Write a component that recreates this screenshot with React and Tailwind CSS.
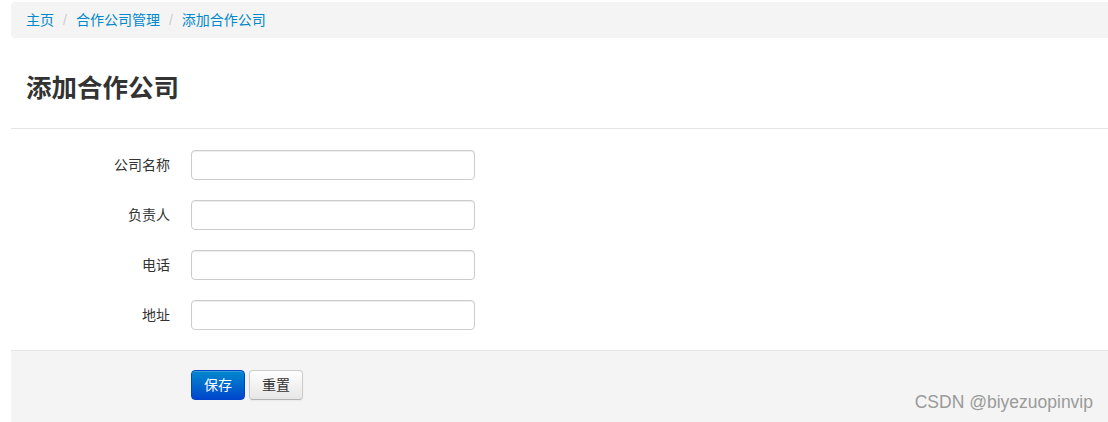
import React from "react";

const fields = ["公司名称", "负责人", "电话", "地址"];

export default function App() {
  return (
    <div
      className="min-h-[422px] bg-white pl-[11px] text-[14px] text-[#333]"
      style={{ fontFamily: '"Liberation Sans", "Noto Sans CJK SC", sans-serif' }}
    >
      {/* Breadcrumb */}
      <div className="mt-[2px] flex h-[36px] items-center rounded-l-[4px] bg-[#f4f4f4] px-[15px]">
        <a className="text-[#0088cc]">主页</a>
        <span className="mx-[9px] text-[#ccc]">/</span>
        <a className="text-[#0088cc]">合作公司管理</a>
        <span className="mx-[9px] text-[#ccc]">/</span>
        <a className="text-[#0088cc]">添加合作公司</a>
      </div>

      {/* Page header */}
      <div className="border-b border-[#e5e5e5] pt-[36px] pb-[26px] pl-[15px]">
        <h3 className="text-[25.5px] font-semibold leading-[28px] text-[#333]">添加合作公司</h3>
      </div>

      {/* Form */}
      <div className="flex flex-col gap-[20px] pt-[21px] pb-[20px]">
        {fields.map((label) => (
          <div key={label} className="flex items-center">
            <label className="w-[159px] text-right text-[14px] text-[#333]">{label}</label>
            <input
              type="text"
              className="ml-[21px] h-[30px] w-[284px] rounded-[4px] border border-[#ccc] bg-white px-[6px] shadow-[inset_0_1px_1px_rgba(0,0,0,0.075)] outline-none"
            />
          </div>
        ))}
      </div>

      {/* Form actions */}
      <div className="relative min-h-[72px] border-t border-[#e5e5e5] bg-[#f4f4f4] pt-[19px] pl-[180px]">
        <div className="flex gap-[4px]">
          <button className="h-[30px] w-[54px] rounded-[4px] border border-[#0044cc] bg-gradient-to-b from-[#0088cc] to-[#0044cc] text-[14px] text-white shadow-[inset_0_1px_0_rgba(255,255,255,0.2)]">
            保存
          </button>
          <button className="h-[30px] w-[54px] rounded-[4px] border border-[#ccc] border-b-[#b3b3b3] bg-gradient-to-b from-white to-[#e6e6e6] text-[14px] text-[#333] shadow-[0_1px_2px_rgba(0,0,0,0.05)]">
            重置
          </button>
        </div>
        <div className="absolute top-[40px] right-[15px] text-[17.5px] leading-[22px] text-[#9a9a9a]">
          CSDN @biyezuopinvip
        </div>
      </div>
    </div>
  );
}
